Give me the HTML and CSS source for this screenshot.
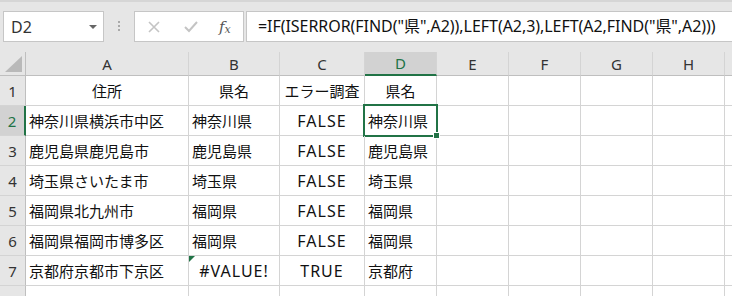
FILE: index.html
```html
<!DOCTYPE html>
<html>
<head>
  <meta http-equiv="Content-type" content="text/html; charset=utf-8">
  <link rel="stylesheet" href="styles.css">
</head>
<body>
  <div class="toolbar">
    <div class="namebox">
      <span class="name">D2</span>
      <span class="caret"></span>
    </div>
    <div class="grip"><i></i><i></i><i></i></div>
    <div class="fbuttons">
      <svg class="ico" width="14" height="14" viewBox="0 0 14 14"><path d="M2 2 L12 12 M12 2 L2 12" stroke="#c4c4c4" stroke-width="1.6" fill="none"/></svg>
      <svg class="ico" width="16" height="14" viewBox="0 0 16 14"><path d="M2 7 L6 11 L14 2" stroke="#c4c4c4" stroke-width="2" fill="none"/></svg>
      <span class="fx">f<sub>x</sub></span>
    </div>
    <div class="formula">=IF(ISERROR(FIND("県",A2)),LEFT(A2,3),LEFT(A2,FIND("県",A2)))</div>
  </div>

  <div class="sheet">
    <div class="hd corner"><span class="tri"></span></div>
    <div class="hd">A</div>
    <div class="hd">B</div>
    <div class="hd">C</div>
    <div class="hd sel">D</div>
    <div class="hd">E</div>
    <div class="hd">F</div>
    <div class="hd">G</div>
    <div class="hd">H</div>
    <div class="hd"></div>

    <div class="rh">1</div>
    <div class="c mid">住所</div>
    <div class="c mid">県名</div>
    <div class="c mid">エラー調査</div>
    <div class="c mid">県名</div>
    <div class="c"></div><div class="c"></div><div class="c"></div><div class="c"></div><div class="c"></div>

    <div class="rh sel">2</div>
    <div class="c">神奈川県横浜市中区</div>
    <div class="c">神奈川県</div>
    <div class="c mid val">FALSE</div>
    <div class="c active">神奈川県</div>
    <div class="c"></div><div class="c"></div><div class="c"></div><div class="c"></div><div class="c"></div>

    <div class="rh">3</div>
    <div class="c">鹿児島県鹿児島市</div>
    <div class="c">鹿児島県</div>
    <div class="c mid val">FALSE</div>
    <div class="c">鹿児島県</div>
    <div class="c"></div><div class="c"></div><div class="c"></div><div class="c"></div><div class="c"></div>

    <div class="rh">4</div>
    <div class="c">埼玉県さいたま市</div>
    <div class="c">埼玉県</div>
    <div class="c mid val">FALSE</div>
    <div class="c">埼玉県</div>
    <div class="c"></div><div class="c"></div><div class="c"></div><div class="c"></div><div class="c"></div>

    <div class="rh">5</div>
    <div class="c">福岡県北九州市</div>
    <div class="c">福岡県</div>
    <div class="c mid val">FALSE</div>
    <div class="c">福岡県</div>
    <div class="c"></div><div class="c"></div><div class="c"></div><div class="c"></div><div class="c"></div>

    <div class="rh">6</div>
    <div class="c">福岡県福岡市博多区</div>
    <div class="c">福岡県</div>
    <div class="c mid val">FALSE</div>
    <div class="c">福岡県</div>
    <div class="c"></div><div class="c"></div><div class="c"></div><div class="c"></div><div class="c"></div>

    <div class="rh">7</div>
    <div class="c">京都府京都市下京区</div>
    <div class="c mid val flag">#VALUE!</div>
    <div class="c mid val">TRUE</div>
    <div class="c">京都府</div>
    <div class="c"></div><div class="c"></div><div class="c"></div><div class="c"></div><div class="c"></div>

    <div class="rh"></div>
    <div class="c"></div><div class="c"></div><div class="c"></div><div class="c"></div>
    <div class="c"></div><div class="c"></div><div class="c"></div><div class="c"></div><div class="c"></div>
  </div>
</body>
</html>
```

FILE: styles.css
```css
body {
  margin: 0;
  width: 732px;
  height: 296px;
  overflow: hidden;
  background: #fff;
  font-family: "Noto Sans CJK JP", "Noto Sans", sans-serif;
}

/* formula bar */
.toolbar {
  display: flex;
  align-items: flex-start;
  height: 52px;
  box-sizing: border-box;
  padding-top: 11px;
  background: #e6e6e6;
  border-top: 2px solid #d6d6d6;
}

.namebox {
  display: flex;
  align-items: center;
  justify-content: space-between;
  width: 101px;
  height: 31px;
  margin-left: 3px;
  margin-top: -2px;
  box-sizing: border-box;
  padding: 0 6px 0 7px;
  background: #fff;
  border: 1px solid #c6c6c6;
  font-family: "Noto Sans", sans-serif;
  font-size: 16px;
  color: #333;
}

.caret {
  width: 0;
  height: 0;
  border-left: 4px solid transparent;
  border-right: 4px solid transparent;
  border-top: 4px solid #666;
}

.grip {
  display: flex;
  flex-direction: column;
  gap: 2px;
  width: 30px;
  align-items: center;
  padding-top: 8px;
}
.grip i {
  width: 2px;
  height: 2px;
  background: #a9a9a9;
}

.fbuttons {
  display: flex;
  align-items: center;
  width: 110px;
  height: 31px;
  margin-top: -2px;
  box-sizing: border-box;
  padding-left: 12px;
  gap: 22px;
  background: #fff;
  border: 1px solid #c6c6c6;
}

.fx {
  font-family: "DejaVu Serif", serif;
  font-style: italic;
  font-size: 15px;
  color: #555;
  margin-left: -2px;
}
.fx sub {
  font-size: 11px;
  vertical-align: -1px;
}

.formula {
  flex: 1;
  height: 31px;
  margin-top: -2px;
  margin-left: 2px;
  box-sizing: border-box;
  padding-left: 11px;
  background: #fff;
  border: 1px solid #c6c6c6;
  border-right: none;
  font-family: "Noto Sans", "Noto Sans CJK JP", sans-serif;
  font-size: 16px;
  letter-spacing: -0.05px;
  line-height: 29px;
  color: #111;
  white-space: nowrap;
  overflow: hidden;
}

/* sheet grid */
.sheet {
  display: grid;
  grid-template-columns: 26px 163px 91px 85px 72px 72px 72px 72px 72px 100px;
  grid-template-rows: 24px repeat(8, 30px);
}

.hd, .rh {
  background: #e6e6e6;
  color: #333;
  box-sizing: border-box;
  border-right: 1px solid #d4d4d4;
  border-bottom: 1px solid #bfbfbf;
  font-family: "Noto Sans", sans-serif;
  font-size: 15px;
  display: flex;
  align-items: center;
  justify-content: center;
}

.hd.sel {
  background: #d2d2d2;
  color: #217346;
  border-bottom: 2px solid #217346;
}

.corner {
  border-right: 1px solid #bfbfbf;
  justify-content: flex-end;
  align-items: flex-end;
  padding: 0 3px 3px 0;
}
.tri {
  width: 0;
  height: 0;
  border-left: 17px solid transparent;
  border-bottom: 16px solid #b9b9b9;
}

.rh {
  border-right: 1px solid #bfbfbf;
  border-bottom: 1px solid #d4d4d4;
}
.rh.sel {
  background: #d2d2d2;
  color: #217346;
  border-right: 2px solid #217346;
}

.c {
  box-sizing: border-box;
  border-right: 1px solid #d4d4d4;
  border-bottom: 1px solid #d4d4d4;
  font-size: 15px;
  color: #111;
  padding: 0 3px;
  display: flex;
  align-items: center;
  white-space: nowrap;
  position: relative;
}
.c.mid {
  justify-content: center;
}
.c.val {
  font-family: "Noto Sans", sans-serif;
  font-size: 16px;
  letter-spacing: 1px;
}

.active::after {
  content: "";
  position: absolute;
  left: -2px;
  top: -2px;
  right: -2px;
  bottom: -2px;
  border: 2px solid #217346;
}
.active::before {
  content: "";
  position: absolute;
  right: -4px;
  bottom: -4px;
  width: 5px;
  height: 5px;
  background: #217346;
  border: 1px solid #fff;
  z-index: 1;
}

.flag::before {
  content: "";
  position: absolute;
  left: 0;
  top: 0;
  border-top: 6px solid #217346;
  border-right: 6px solid transparent;
}
```
